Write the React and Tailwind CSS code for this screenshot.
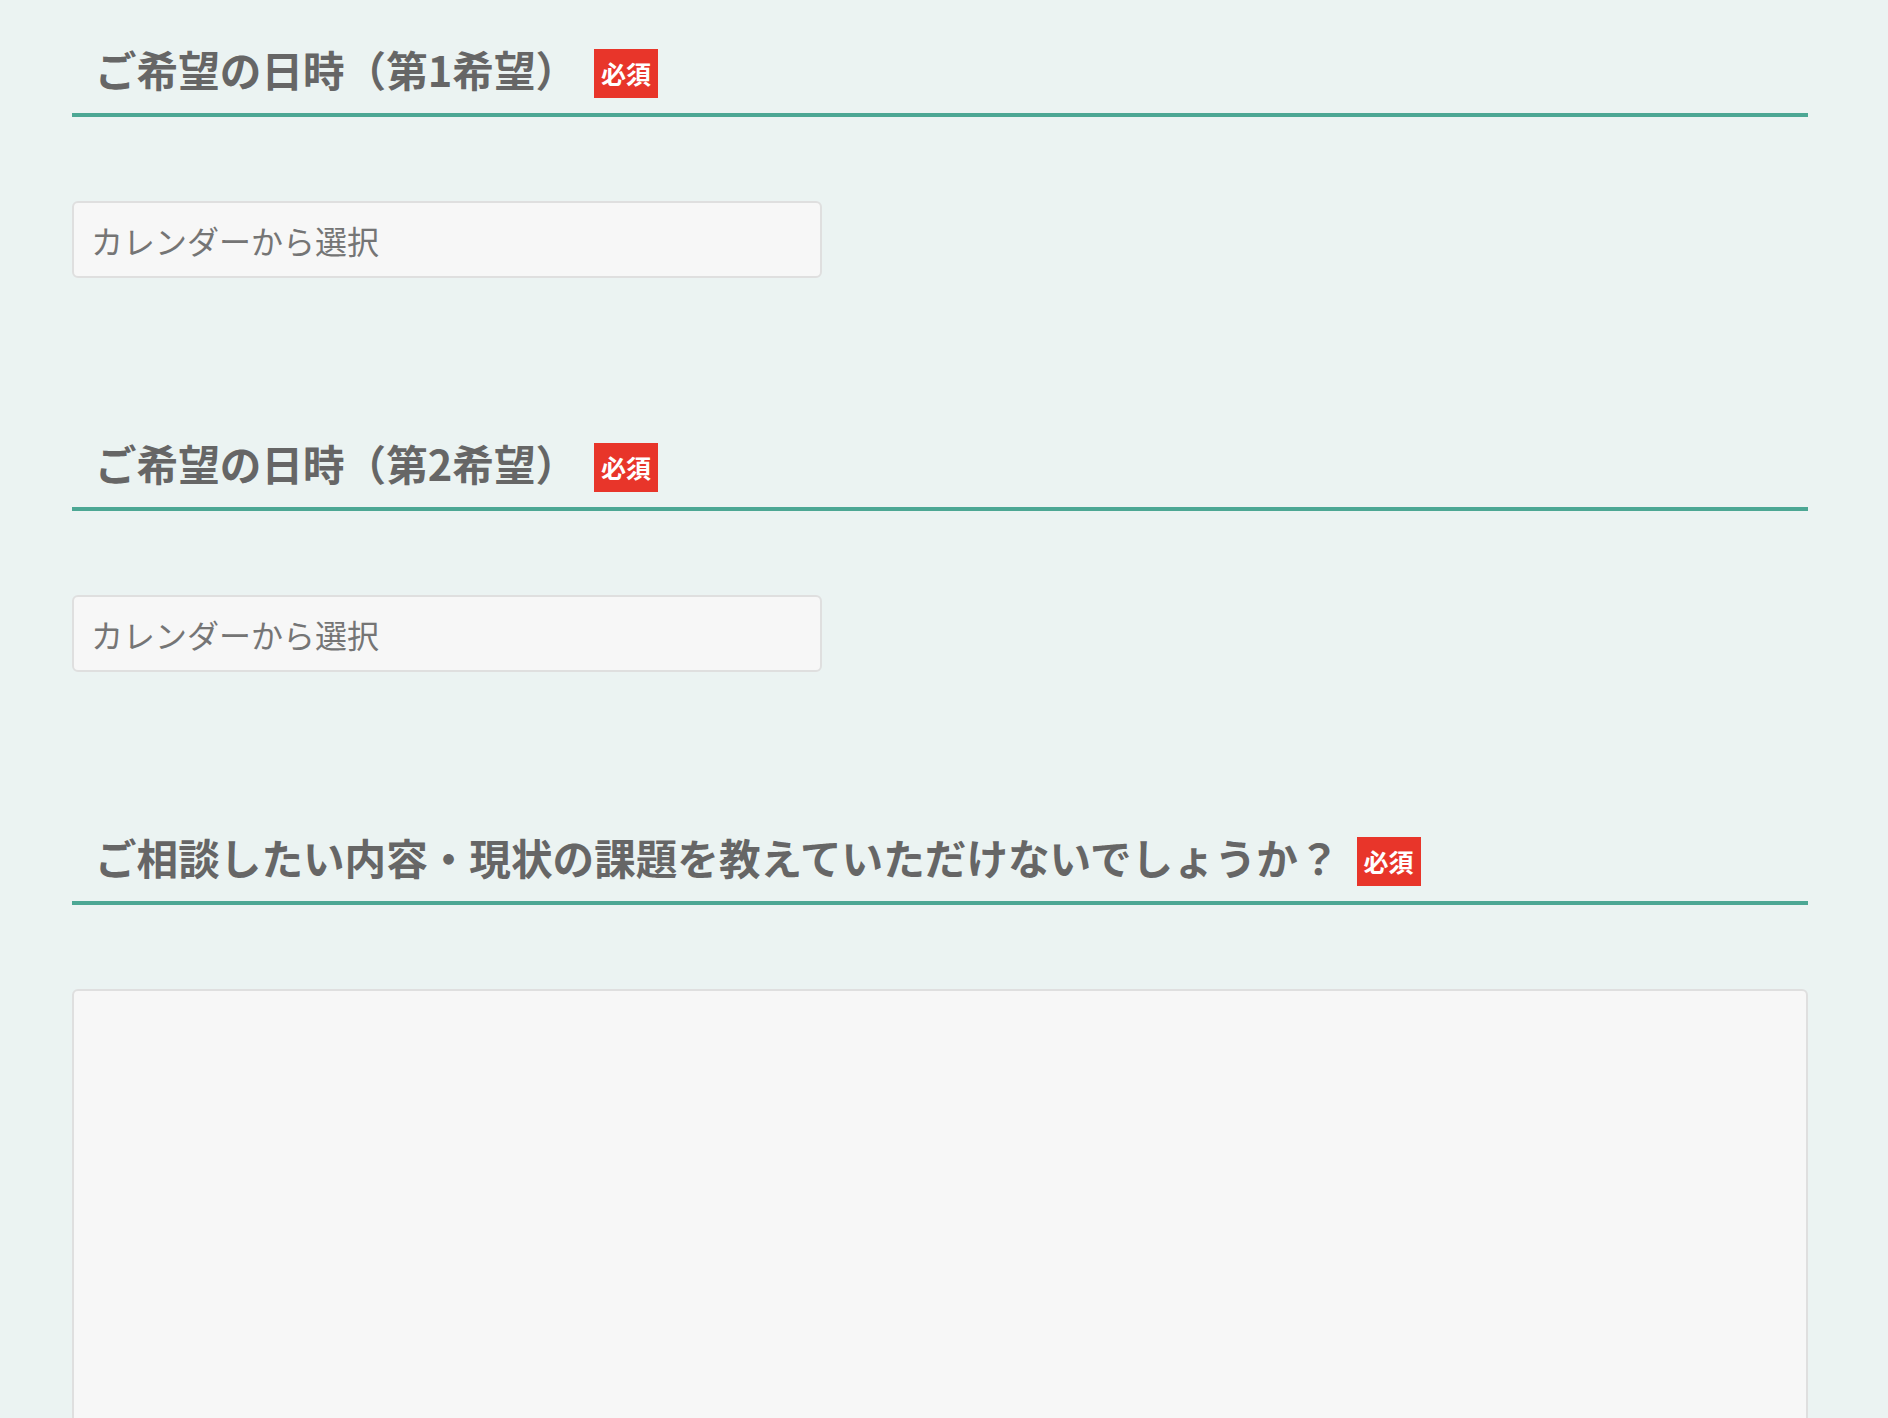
import React from 'react';

const font = { fontFamily: '"Noto Sans CJK JP", "Noto Sans", sans-serif' };

const Heading = ({ children }) => (
  <div className="flex items-start border-b-4 border-[#4ca794] pl-[23px] pb-[15px]">
    <h2 className="mt-[2px] text-[41.6px] leading-[57px] font-bold text-[#666666]">
      {children}
    </h2>
    <span className="ml-[17px] mt-[10px] flex h-[49px] w-[64px] items-center justify-center bg-[#e8352a] text-[25px] font-bold leading-none text-white">
      必須
    </span>
  </div>
);

const DateField = () => (
  <input
    type="text"
    placeholder="カレンダーから選択"
    className="mt-[84px] h-[77px] w-[750px] rounded-[6px] border-2 border-[#dfdfdf] bg-[#f7f7f7] px-[17px] text-[32px] text-[#666] placeholder:text-[#757575] outline-none"
    style={font}
  />
);

export default function App() {
  return (
    <div className="min-h-screen bg-[#ebf3f2] pt-[39px]" style={font}>
      <div className="ml-[72px] flex w-[1736px] flex-col">
        <section className="h-[394px]">
          <Heading>ご希望の日時（第1希望）</Heading>
          <DateField />
        </section>

        <section className="h-[394px]">
          <Heading>ご希望の日時（第2希望）</Heading>
          <DateField />
        </section>

        <section>
          <Heading>ご相談したい内容・現状の課題を教えていただけないでしょうか？</Heading>
          <textarea
            className="mt-[84px] block h-[520px] w-full resize-none rounded-[6px] border-2 border-[#dfdfdf] bg-[#f7f7f7] outline-none"
            style={font}
          />
        </section>
      </div>
    </div>
  );
}
